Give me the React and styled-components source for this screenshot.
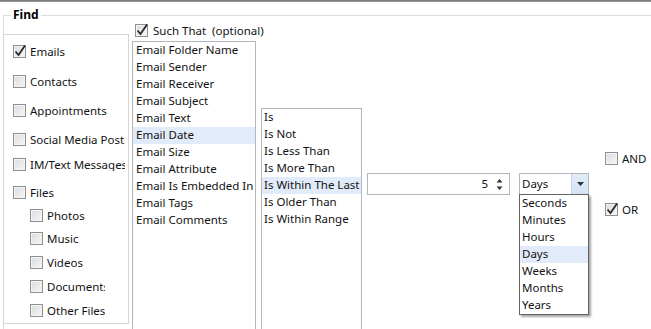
import React from 'react';
import styled, { createGlobalStyle } from 'styled-components';

const GlobalStyle = createGlobalStyle`
  html, body {
    margin: 0;
    padding: 0;
    background: #fff;
  }
  body {
    font-family: 'Noto Sans', 'Liberation Sans', sans-serif;
    font-size: 11.5px;
    color: #121212;
  }
`;

const Page = styled.div`
  width: 651px;
  height: 329px;
  overflow: hidden;
  position: relative;
`;

const TopRule = styled.div`
  height: 2px;
  background: linear-gradient(#6f6f6f, #a0a0a0);
`;

const Group = styled.fieldset`
  margin: 6px 0 0 3px;
  padding: 0;
  border: none;
  border-top: 1px solid #dcdcdc;
  border-left: 1px solid #dcdcdc;
  min-width: 0;
  height: 340px;
`;

const Legend = styled.legend`
  margin-left: 7px;
  padding: 0 2px;
  font-weight: bold;
  font-size: 12px;
  line-height: 14px;
  color: #000;
`;

const Columns = styled.div`
  display: flex;
  align-items: flex-start;
  margin-top: -6px;
`;

const Column = styled.div`
  display: flex;
  flex-direction: column;
  flex: none;
  margin-top: ${p => p.$top || 0}px;
  margin-left: ${p => p.$left || 0}px;
`;

const KindPanel = styled.div`
  width: 124px;
  height: 288px;
  border: 1px solid #d5d5d5;
  margin-left: -1px;
  display: flex;
  flex-direction: column;
`;

const CheckRow = styled.label`
  display: flex;
  align-items: center;
  height: 13px;
  margin-top: ${p => p.$gap}px;
  margin-left: ${p => (p.$sub ? 26 : 9)}px;
  width: ${p => (p.$sub ? 75 : 112)}px;
  gap: 4px;
  white-space: nowrap;
  overflow: hidden;
`;

const Box = styled.span`
  flex: none;
  width: 11px;
  height: 11px;
  border: 1px solid #8e8f8f;
  background: linear-gradient(135deg, #dcdcdc, #f6f6f6);
  box-shadow: inset 0 0 0 1px #f4f4f4;
  position: relative;
  display: inline-block;
`;

const Tick = styled.svg`
  position: absolute;
  left: 0;
  top: -2px;
`;

const Label = styled.span`
  overflow: hidden;
  white-space: nowrap;
  line-height: 15px;
  margin-top: -1px;
`;

const TickMark = () => (
  <Tick width="13" height="13" viewBox="0 0 13 13">
    <path d="M1.5 7.5 L4.5 11 L11 1.5" fill="none" stroke="#2a2a2a" strokeWidth="1.8" />
  </Tick>
);

const Check = ({ checked, children, ...rest }) => (
  <CheckRow {...rest}>
    <Box>{checked && <TickMark />}</Box>
    <Label>{children}</Label>
  </CheckRow>
);

const SuchThat = styled.label`
  display: flex;
  align-items: center;
  gap: 5px;
  height: 14px;
  margin-left: 3px;
  white-space: nowrap;
  width: 122px;
`;

const List = styled.div`
  width: ${p => p.$w}px;
  height: ${p => p.$h}px;
  border: 1px solid #b4b6bd;
  background: #fff;
  display: flex;
  flex-direction: column;
  margin-top: ${p => p.$top || 0}px;
`;

const Item = styled.div`
  height: 17px;
  line-height: 16px;
  padding-left: ${p => p.$pad || 3}px;
  white-space: nowrap;
  overflow: hidden;
  background: ${p => (p.$sel ? '#e2ebf9' : 'transparent')};
`;

const Spin = styled.div`
  width: 141px;
  height: 20px;
  border: 1px solid #b4b6bd;
  display: flex;
  align-items: center;
  justify-content: flex-end;
  margin-left: 5px;
`;

const SpinValue = styled.span`
  line-height: 20px;
  margin-right: 8px;
`;

const SpinArrows = styled.svg`
  margin-right: 6px;
`;

const Combo = styled.div`
  position: relative;
  width: 68px;
  height: 20px;
  border: 1px solid #b4b6bd;
  display: flex;
  align-items: stretch;
  margin-left: 9px;
`;

const ComboText = styled.span`
  flex: 1;
  line-height: 20px;
  padding-left: 2px;
`;

const ComboButton = styled.span`
  width: 16px;
  background: linear-gradient(#e3edf9, #d4e3f5);
  border-left: 1px solid #c5d5ea;
  display: flex;
  align-items: center;
  justify-content: center;
`;

const DropList = styled.div`
  position: absolute;
  left: -1px;
  top: 20px;
  width: 68px;
  border: 1px solid #646464;
  background: #fff;
  box-shadow: 2px 2px 2px rgba(0, 0, 0, 0.35);
  display: flex;
  flex-direction: column;
`;

const Logic = styled.div`
  display: flex;
  flex-direction: column;
  margin-left: 16px;
  margin-top: ${p => p.$top}px;
`;

const LogicRow = styled(CheckRow)`
  margin-left: 0;
  width: 50px;
`;

const kinds = [
  { label: 'Emails', gap: 10, checked: true },
  { label: 'Contacts', gap: 17 },
  { label: 'Appointments', gap: 16 },
  { label: 'Social Media Posts', gap: 16 },
  { label: 'IM/Text Messages', gap: 12 },
  { label: 'Files', gap: 15 },
  { label: 'Photos', gap: 10, sub: true },
  { label: 'Music', gap: 10, sub: true },
  { label: 'Videos', gap: 11, sub: true },
  { label: 'Documents', gap: 11, sub: true },
  { label: 'Other Files', gap: 11, sub: true },
];

const fields = [
  'Email Folder Name', 'Email Sender', 'Email Receiver', 'Email Subject', 'Email Text',
  'Email Date', 'Email Size', 'Email Attribute', 'Email Is Embedded In', 'Email Tags', 'Email Comments',
];

const operators = [
  'Is', 'Is Not', 'Is Less Than', 'Is More Than', 'Is Within The Last', 'Is Older Than', 'Is Within Range',
];

const units = ['Seconds', 'Minutes', 'Hours', 'Days', 'Weeks', 'Months', 'Years'];

export default function App() {
  return (
    <Page>
      <GlobalStyle />
      <TopRule />
      <Group>
        <Legend>Find</Legend>
        <Columns>
          <Column $top={18}>
            <KindPanel>
              {kinds.map(k => (
                <Check key={k.label} $gap={k.gap} $sub={k.sub} checked={k.checked}>
                  {k.label}
                </Check>
              ))}
            </KindPanel>
          </Column>
          <Column $top={7} $left={3}>
            <SuchThat>
              <Box>
                <TickMark />
              </Box>
              <span>Such That&nbsp;&nbsp;(optional)</span>
            </SuchThat>
            <List $w={122} $h={300} $top={4}>
              {fields.map((f, i) => (
                <Item key={f} $sel={i === 5}>{f}</Item>
              ))}
            </List>
          </Column>
          <Column $top={92} $left={4}>
            <List $w={99} $h={240}>
              {operators.map((o, i) => (
                <Item key={o} $pad={2} $sel={i === 4}>{o}</Item>
              ))}
            </List>
          </Column>
          <Column $top={157}>
            <Spin>
              <SpinValue>5</SpinValue>
              <SpinArrows width="7" height="13" viewBox="0 0 7 13">
                <path d="M3.5 1 L6.5 4.5 L0.5 4.5 Z" fill="#333" />
                <path d="M0.5 8.5 L6.5 8.5 L3.5 12 Z" fill="#333" />
              </SpinArrows>
            </Spin>
          </Column>
          <Column $top={157}>
            <Combo>
              <ComboText>Days</ComboText>
              <ComboButton>
                <svg width="7" height="4" viewBox="0 0 7 4">
                  <path d="M0 0 L7 0 L3.5 4 Z" fill="#333" />
                </svg>
              </ComboButton>
              <DropList>
                {units.map(u => (
                  <Item key={u} $pad={2} $sel={u === 'Days'}>{u}</Item>
                ))}
              </DropList>
            </Combo>
          </Column>
          <Logic $top={136}>
            <LogicRow $gap={0}>
              <Box />
              <Label>AND</Label>
            </LogicRow>
            <LogicRow $gap={38}>
              <Box>
                <TickMark />
              </Box>
              <Label>OR</Label>
            </LogicRow>
          </Logic>
        </Columns>
      </Group>
    </Page>
  );
}
